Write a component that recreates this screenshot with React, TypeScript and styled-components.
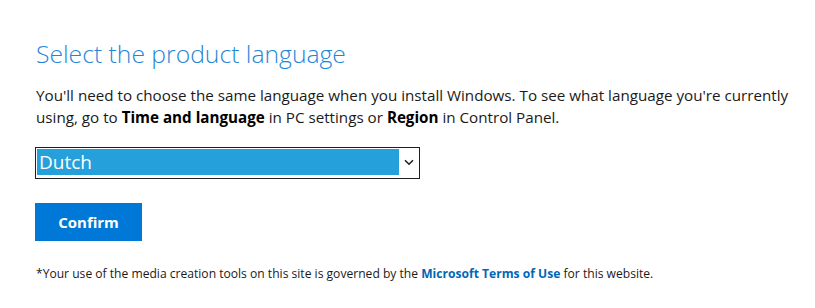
import React from "react";
import styled, { createGlobalStyle } from "styled-components";

const GlobalStyle = createGlobalStyle`
  html, body {
    margin: 0;
    padding: 0;
    background: #fff;
  }
  body {
    font-family: "Open Sans", "Noto Sans", sans-serif;
    color: #000;
  }
`;

const Page = styled.div`
  padding: 38px 0 0 36px;
  width: 779px;
`;

const Heading = styled.h2`
  margin: 0;
  font-size: 24.7px;
  font-weight: 300;
  line-height: 32px;
  color: #1e87d8;
`;

const Intro = styled.p`
  margin: 14px 0 0;
  font-size: 15.2px;
  line-height: 22px;
  color: #1a1a1a;
  max-width: 770px;

  strong {
    font-weight: 700;
    color: #000;
  }
`;

const SelectBox = styled.div`
  margin: 19px 0 0 -1px;
  width: 381px;
  height: 28px;
  border: 1px solid #1f1f1f;
  padding: 1px;
  box-sizing: content-box;
  display: flex;
  align-items: stretch;
  cursor: pointer;
`;

const SelectedOption = styled.div`
  flex: 1;
  background: #26a0da;
  color: #fff;
  font-size: 19px;
  line-height: 24px;
  padding-left: 2px;
  margin-bottom: 2px;
  display: flex;
  align-items: center;
`;

const Arrow = styled.div`
  width: 19px;
  display: flex;
  align-items: center;
  justify-content: center;
  padding-bottom: 1px;
`;

const ConfirmButton = styled.button`
  margin: 24px 0 0 -1px;
  width: 107px;
  height: 38px;
  border: none;
  background: #0078d7;
  color: #fff;
  font-family: "Open Sans", "Noto Sans", sans-serif;
  font-size: 15px;
  font-weight: 700;
  cursor: pointer;
  display: block;
`;

const Footnote = styled.p`
  margin: 25px 0 0;
  font-size: 12.1px;
  line-height: 16px;
  color: #1a1a1a;
`;

const TermsLink = styled.a`
  color: #0067b8;
  font-weight: 700;
  text-decoration: none;
`;

const Chevron = () => (
  <svg width="10" height="7" viewBox="0 0 10 7" fill="none">
    <path d="M1 1.2 L5 5.2 L9 1.2" stroke="#222" strokeWidth="1.6" />
  </svg>
);

export default function App() {
  return (
    <>
      <GlobalStyle />
      <Page>
        <Heading>Select the product language</Heading>
        <Intro>
          You'll need to choose the same language when you install Windows. To see what
          language you're currently using, go to <strong>Time and language</strong> in PC
          settings or <strong>Region</strong> in Control Panel.
        </Intro>
        <SelectBox role="combobox" aria-label="Product language">
          <SelectedOption>Dutch</SelectedOption>
          <Arrow>
            <Chevron />
          </Arrow>
        </SelectBox>
        <ConfirmButton>Confirm</ConfirmButton>
        <Footnote>
          *Your use of the media creation tools on this site is governed by the{" "}
          <TermsLink href="#">Microsoft Terms of Use</TermsLink> for this website.
        </Footnote>
      </Page>
    </>
  );
}
